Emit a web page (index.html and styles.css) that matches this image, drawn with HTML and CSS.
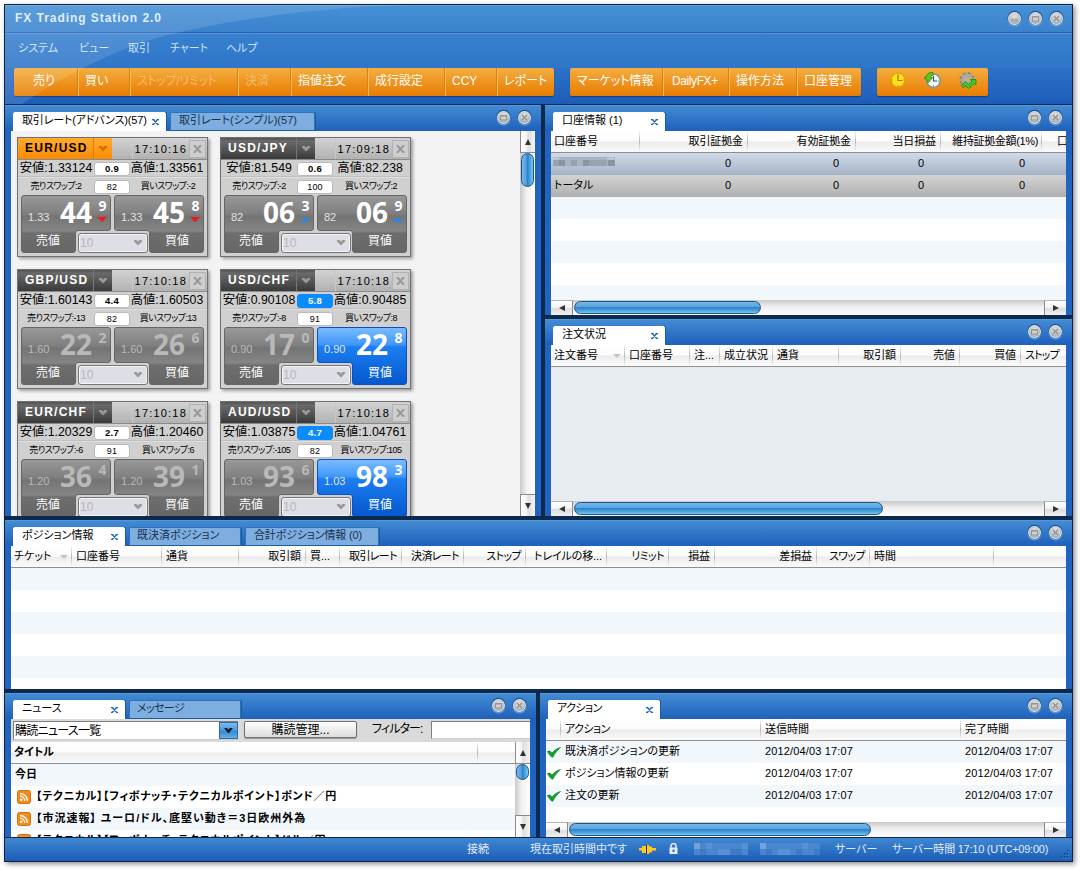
FILE: index.html
```html
<!DOCTYPE html>
<html lang="ja">
<head>
    <meta charset="UTF-8">
    <title>FX Trading Station 2.0</title>
    <link rel="stylesheet" href="styles.css">
</head>
<body>
    <!-- shared icons -->
    <svg class="defs" width="0" height="0">
        <defs>
            <linearGradient id="gray" x1="0" y1="0" x2="0" y2="1">
                <stop offset="0" stop-color="#999"/><stop offset=".32" stop-color="#7f7f7f"/>
                <stop offset=".36" stop-color="#747474"/><stop offset=".62" stop-color="#858585"/>
                <stop offset=".66" stop-color="#6e6e6e"/><stop offset="1" stop-color="#666"/>
            </linearGradient>
            <linearGradient id="blue" x1="0" y1="0" x2="0" y2="1">
                <stop offset="0" stop-color="#7dbdff"/><stop offset=".3" stop-color="#3f97fb"/>
                <stop offset=".34" stop-color="#1b7ef2"/><stop offset="1" stop-color="#0557cc"/>
            </linearGradient>
            <radialGradient id="knob" cx=".5" cy=".35" r=".65">
                <stop offset="0" stop-color="#e2e2e2"/><stop offset=".6" stop-color="#c6cacd"/><stop offset="1" stop-color="#9aa2a8"/>
            </radialGradient>
        </defs>
        <symbol id="i-base" viewBox="0 0 17 17">
            <circle cx="8.5" cy="9.5" r="7.2" fill="#79aee4" opacity=".65"/>
            <circle cx="8.5" cy="8" r="7.2" fill="#1d5290"/>
            <circle cx="8.5" cy="8.5" r="6.5" fill="#e6edf3"/>
            <circle cx="8.5" cy="8.3" r="5.7" fill="url(#knob)"/>
        </symbol>
        <symbol id="i-min" viewBox="0 0 17 17">
            <use href="#i-base"/><path d="M5.5 9h6v2h-6z" fill="#b5b5b5" stroke="#949494" stroke-width=".6"/>
        </symbol>
        <symbol id="i-max" viewBox="0 0 17 17">
            <use href="#i-base"/><path d="M5.5 6.500h6v4.500h-6zM5.500 7h6" fill="#cfcfcf" stroke="#949494"/>
        </symbol>
        <symbol id="i-close" viewBox="0 0 17 17">
            <use href="#i-base"/><path d="M6 6l5 5M11 6l-5 5" stroke="#949494" stroke-width="1.6"/>
        </symbol>
        <symbol id="i-x" viewBox="0 0 7 6">
            <path d="M0 .5h2.500M4.500.5H7M0 5.500h2.500M4.500 5.500H7M1.300.5l4.400 5M5.700.5l-4.400 5" stroke="#1f66ae" stroke-width="1.300"/>
        </symbol>
        <symbol id="i-rss" viewBox="0 0 14 14">
            <rect x=".5" y=".5" width="13" height="13" rx="2" fill="#f28a1c" stroke="#d9730a"/>
            <circle cx="4.2" cy="9.8" r="1.3" fill="#fff"/>
            <path d="M3 6.2a4.8 4.8 0 0 1 4.8 4.8M3 3.5A7.5 7.5 0 0 1 10.5 11" fill="none" stroke="#fff" stroke-width="1.3"/>
        </symbol>
        <symbol id="i-check" viewBox="0 0 14 11">
            <path d="M.5 4.5c1.600-.8 3.200-.4 4.500 1.500C7.200 3.500 10 1.300 13.500.5 10.500 3 8 6 5.800 10.300 3.800 9.900 1.700 7.500.5 4.500z" fill="#12a32d" stroke="#087a1c" stroke-width=".6"/>
        </symbol>
    </svg>

    <div class="window">
        <svg class="shine" width="400" height="99"><path d="M0 0H400C300 3 210 17 145 35 90 53 45 80 17 99H0z" fill="#fff" fill-opacity=".12"/></svg>

        <div class="titlebar">
            <span class="title">FX Trading Station 2.0</span>
            <span class="win-btns"><svg><use href="#i-min"/></svg><svg><use href="#i-max"/></svg><svg><use href="#i-close"/></svg></span>
        </div>

        <div class="menu">
            <span>システム</span><span>ビュー</span><span>取引</span><span>チャート</span><span>ヘルプ</span>
        </div>

        <div class="toolbar">
            <div class="tools tools-main">
                <span class="first">売り</span><span>買い</span><span class="off">ストップ/リミット</span><span class="off">決済</span><span>指値注文</span><span>成行設定</span><span>CCY</span><span>レポート</span>
            </div>
            <div class="tools tools-info">
                <span>マーケット情報</span><span class="daily">DailyFX+</span><span>操作方法</span><span>口座管理</span>
            </div>
            <div class="tools tools-icons">
                <svg width="16" height="16" viewBox="0 0 16 16">
                    <circle cx="8" cy="8" r="7" fill="#ffe01c" stroke="#e0a000" stroke-width="1.200"/>
                    <path d="M8 3V8.500H12.500" fill="none" stroke="#c26a00" stroke-width="1.200"/>
                    <path d="M8 1.500v1.200M8 13.300v1.200M1.500 8h1.200M13.300 8h1.200" stroke="#b87800"/>
                </svg>
                <svg width="17" height="16" viewBox="0 0 17 16">
                    <circle cx="9.500" cy="8.700" r="6.600" fill="#f2f9fd" stroke="#6f97ab" stroke-width="1.300"/>
                    <path d="M9.500 4V9H13M9.500 13.500v.8M15 9h-.8" fill="none" stroke="#3a5563" stroke-width="1.200"/>
                    <path d="M9 .5C4.500 0 2.200 2.500 2 5.500H.4L4.300 10.800 8.500 5.500H6.300C6.500 4 7.500 3.300 9 3.500z" fill="#5cc51c" stroke="#2f8209" stroke-width=".8"/>
                </svg>
                <svg width="18" height="17" viewBox="0 0 18 17">
                    <circle cx="8" cy="7.500" r="6.200" fill="none" stroke="#7c8b94" stroke-width="2.600" stroke-dasharray="2.800 2.070"/>
                    <circle cx="8" cy="7.500" r="4" fill="#f0a548" stroke="#9eadb6" stroke-width="3.400"/>
                    <path d="M2.500 14L6.500 9.500 9.500 12.500 13 9 11.500 7.500H17V12.700L15.500 11.500 9.500 16.500 6.500 13.500 4.500 15.800z" fill="#43c92b" stroke="#168a10" stroke-width=".8"/>
                </svg>
            </div>
        </div>

        <div class="row row-top">
            <section class="panel rates">
                <div class="tabs">
                    <span class="tab on t153">取引レート(アドバンス)(57)<svg class="x"><use href="#i-x"/></svg></span>
                    <span class="tab t145">取引レート(シンプル)(57)</span>
                    <span class="win-btns"><svg><use href="#i-max"/></svg><svg><use href="#i-close"/></svg></span>
                </div>
                <div class="content rates-body">
                    <div class="cards" id="cards"></div>
                    <div class="vscroll"><i class="up"></i><b class="thumb"></b><i class="down"></i></div>
                </div>
            </section>

            <div class="col">
                <section class="panel account">
                    <div class="tabs">
                        <span class="tab on">口座情報 (1)<svg class="x"><use href="#i-x"/></svg></span>
                        <span class="win-btns"><svg><use href="#i-max"/></svg><svg><use href="#i-close"/></svg></span>
                    </div>
                    <div class="content striped">
                        <div class="tr th cols-account">
                            <span>口座番号</span><span class="r">取引証拠金</span><span class="r">有効証拠金</span><span class="r">当日損益</span><span class="r tight">維持証拠金額(1%)</span><span>口</span>
                        </div>
                        <div class="tr selected cols-account num">
                            <span><svg class="mosaic" width="62" height="9" shape-rendering="crispEdges">
                                <path d="M0 0h62v9H0z" fill="#a9b4c3"/>
                                <path d="M0 3h6v6H0zM18 3h6v6h-6zM36 3h18v6H36z" fill="#97a3b1"/>
                                <path d="M6 3h6v6H6zM30 3h6v6h-6zM55 3h7v6h-7z" fill="#8794a2"/>
                                <path d="M0 0h6v3H0zM54 0h7v3h-7z" fill="#bac6d3"/>
                            </svg></span><span class="r">0</span><span class="r">0</span><span class="r">0</span><span class="r">0</span><span></span>
                        </div>
                        <div class="tr total cols-account num">
                            <span>トータル</span><span class="r">0</span><span class="r">0</span><span class="r">0</span><span class="r">0</span><span></span>
                        </div>
                        <div class="hscroll"><i class="left"></i><b class="thumb w187"></b><i class="right"></i></div>
                    </div>
                </section>

                <section class="panel orders">
                    <div class="tabs">
                        <span class="tab on">注文状況<svg class="x"><use href="#i-x"/></svg></span>
                        <span class="win-btns"><svg><use href="#i-max"/></svg><svg><use href="#i-close"/></svg></span>
                    </div>
                    <div class="content empty">
                        <div class="tr th cols-orders">
                            <span class="sorted">注文番号</span><span>口座番号</span><span>注...</span><span>成立状況</span><span>通貨</span><span class="r">取引額</span><span class="r">売値</span><span class="r">買値</span><span class="stop">ストップ</span>
                        </div>
                        <div class="hscroll"><i class="left"></i><b class="thumb w309"></b><i class="right"></i></div>
                    </div>
                </section>
            </div>
        </div>

        <section class="panel positions">
            <div class="tabs">
                <span class="tab on">ポジション情報<svg class="x"><use href="#i-x"/></svg></span>
                <span class="tab">既決済ポジション</span>
                <span class="tab t134">合計ポジション情報 (0)</span>
                <span class="win-btns"><svg><use href="#i-max"/></svg><svg><use href="#i-close"/></svg></span>
            </div>
            <div class="content striped">
                <div class="tr th cols-positions">
                    <span class="sorted">チケット</span><span>口座番号</span><span>通貨</span><span class="r">取引額</span><span>買...</span><span class="r kana">取引レート</span><span class="r kana">決済レート</span><span class="r kana">ストップ</span><span class="r">トレイルの移...</span><span class="r kana">リミット</span><span class="r">損益</span><span class="r">差損益</span><span class="r kana">スワップ</span><span>時間</span><span></span>
                </div>
            </div>
        </section>

        <div class="row row-bottom">
            <section class="panel news">
                <div class="tabs">
                    <span class="tab on">ニュース<svg class="x"><use href="#i-x"/></svg></span>
                    <span class="tab kana">メッセージ</span>
                    <span class="win-btns"><svg><use href="#i-max"/></svg><svg><use href="#i-close"/></svg></span>
                </div>
                <div class="content">
                    <div class="filter">
                        <div class="select"><span>購読ニュース一覧</span><i><svg width="9" height="6"><path d="M0 0h3l1.500 1.500L6 0h3L4.500 5.500z" fill="#0b1d33"/></svg></i></div>
                        <div class="button">購読管理...</div>
                        <label>フィルター:</label>
                        <div class="input"></div>
                    </div>
                    <div class="news-body">
                        <div class="news-list">
                            <div class="tr th cols-news"><span>タイトル</span><span></span></div>
                            <div class="news-row">今日</div>
                            <div class="news-row item"><svg><use href="#i-rss"/></svg>【テクニカル】【フィボナッチ・テクニカルポイント】ポンド／円</div>
                            <div class="news-row item wide"><svg><use href="#i-rss"/></svg>【市況速報】 ユーロ/ドル、底堅い動き＝3日欧州外為</div>
                            <div class="news-row item"><svg><use href="#i-rss"/></svg>【テクニカル】【フィボナッチ・テクニカルポイント】ドル／円</div>
                        </div>
                        <div class="vscroll"><i class="up"></i><b class="thumb"></b><i class="down"></i></div>
                    </div>
                </div>
            </section>

            <section class="panel actions">
                <div class="tabs">
                    <span class="tab on kana">アクション<svg class="x"><use href="#i-x"/></svg></span>
                    <span class="win-btns"><svg><use href="#i-max"/></svg><svg><use href="#i-close"/></svg></span>
                </div>
                <div class="content striped">
                    <div class="tr th cols-actions"><span></span><span class="kana">アクション</span><span>送信時間</span><span>完了時間</span></div>
                    <div class="tr cols-actions"><span><svg class="check"><use href="#i-check"/></svg></span><span>既決済ポジションの更新</span><span class="date">2012/04/03 17:07</span><span class="date">2012/04/03 17:07</span></div>
                    <div class="tr cols-actions"><span><svg class="check"><use href="#i-check"/></svg></span><span>ポジション情報の更新</span><span class="date">2012/04/03 17:07</span><span class="date">2012/04/03 17:07</span></div>
                    <div class="tr cols-actions"><span><svg class="check"><use href="#i-check"/></svg></span><span>注文の更新</span><span class="date">2012/04/03 17:07</span><span class="date">2012/04/03 17:07</span></div>
                    <div class="hscroll"><i class="left"></i><b class="thumb w302"></b><i class="right"></i></div>
                </div>
            </section>
        </div>

        <div class="status">
            <span class="s-conn">接続</span>
            <span class="s-open">現在取引時間中です</span>
            <svg class="s-plug" width="17" height="9"><path d="M0 3h3V1h4v7H3V5.500H0zM8 0h2v9H8zM10 1.500h3V3h4v2.500h-4V7.500h-3z" fill="#ffc91c"/><path d="M7.500 0v9" stroke="#173a66"/></svg>
            <svg class="s-lock" width="9" height="11"><path d="M2 5V3a2.500 2.500 0 0 1 5 0v2" fill="none" stroke="#e4edf7" stroke-width="1.500"/><path d="M.5 4.500h8V11h-8z" fill="#e4edf7"/><path d="M3.500 6.500h2v2.500h-2z" fill="#2f6fc0"/></svg>
            <svg class="s-mosaic" width="127" height="12" shape-rendering="crispEdges">
                <path d="M0 0h54v12H0zM66 0h60v12H66z" fill="#4a86cf"/>
                <path d="M0 0h6v6H0zM66 0h6v6h-6z" fill="#73a3dd"/>
                <path d="M12 0h6v6h-6zM24 6h12v6H24zM48 0h6v6h-6zM84 6h12v6H84zM108 0h6v6h-6z" fill="#5890d4"/>
                <path d="M6 6h6v6H6zM36 6h12v6H36zM72 6h6v6h-6zM102 6h6v6h-6zM120 6h6v6h-6z" fill="#3f7ac6"/>
            </svg>
            <span class="s-server">サーバー</span>
            <span class="s-time">サーバー時間 17:10 (UTC+09:00)</span>
            <svg class="s-grip" width="9" height="9"><path d="M7 1h2M7 4h2M7 7h2M4 4h2M4 7h2M1 7h2" stroke="#164a92" stroke-width="2"/><path d="M8 2h1M8 5h1M8 8h1M5 5h1M5 8h1M2 8h1" stroke="#6ba4e2"/></svg>
        </div>
    </div>
    <script src="rates.js"></script>
</body>
</html>
```
FILE: styles.css
```css
* {
    box-sizing: border-box;
}

body {
    margin: 0;
    width: 1081px;
    height: 870px;
    overflow: hidden;
    background: #fff;
    font-family: "Liberation Sans", "Noto Sans CJK JP", sans-serif;
    font-feature-settings: "palt";
    font-size: 11px;
    color: #000;
    white-space: nowrap;
}

.defs {
    display: block;
}

.window {
    position: relative;
    width: 1069px;
    height: 858px;
    margin: 4px 0 0 4px;
    border: 1px solid #14243c;
    background: #0d2a4c;
    box-shadow: 2px 2px 5px rgba(0, 0, 0, 0.45);
    display: flex;
    flex-direction: column;
}

/* light arc over the header */
.shine {
    position: absolute;
    left: 0;
    top: 0;
    z-index: 2;
}

/* header */
.titlebar {
    height: 28px;
    background: linear-gradient(#4590d6, #3b82cd);
    border-top: 1px solid #5ba2e2;
    border-bottom: 1px solid #2560b8;
    display: flex;
    justify-content: space-between;
    padding: 3px 7px 0 10px;
}

.title {
    font-size: 12px;
    font-weight: bold;
    line-height: 19px;
    letter-spacing: 0.95px;
    color: #dcebfa;
}

.win-btns {
    display: flex;
    gap: 4px;
}

.win-btns svg {
    width: 17px;
    height: 17px;
}

.titlebar .win-btns {
    padding-top: 1px;
}

.menu {
    height: 35px;
    padding: 6px 0 0 13px;
    background: linear-gradient(#3881cd, #2f75ca);
    border-top: 1px solid #5795d8;
    line-height: 16px;
    color: #cfe2f6;
    display: grid;
    grid-template-columns: 61px 49px 42px 56px 60px;
}

.toolbar {
    height: 36px;
    background: linear-gradient(#2d71c7, #1d5dba);
    padding-left: 9px;
    display: flex;
}

.tools {
    height: 28px;
    border-radius: 2px;
    background: linear-gradient(#f4af3f, #ee9420 50%, #e87d02);
    box-shadow: 0 1px 1px #16407c;
    display: grid;
    font-size: 12px;
    line-height: 26px;
    color: #fff;
}

.tools span {
    padding-left: 6px;
    border-left: 1px solid #f7bb5c;
    box-shadow: -1px 0 0 #dc8010;
}

.tools span:first-child {
    border: none;
    box-shadow: none;
    padding-left: 7px;
}

.tools .first:first-child {
    padding-left: 19px;
}

.tools .off {
    color: #f5bb69;
    letter-spacing: -0.3px;
}

.tools .daily {
    padding-left: 8px;
    letter-spacing: -0.4px;
}

.tools-main {
    width: 540px;
    grid-template-columns: 64px 52px 108px 53px 77px 77px 52px 57px;
}

.tools-info {
    width: 291px;
    margin-left: 16px;
    grid-template-columns: 93px 66px 68px 64px;
}

.tools-icons {
    width: 111px;
    margin-left: 16px;
    display: flex;
    padding: 4px 0 0 13px;
    gap: 18px;
}

/* panels */
.row {
    display: flex;
    gap: 4px;
}

.row-top {
    height: 411px;
    margin-top: 1px;
}

.row-bottom {
    height: 144px;
    margin-top: 4px;
}

.col {
    display: flex;
    flex-direction: column;
    gap: 4px;
}

.panel {
    background: #2064bf;
    padding: 0 6px;
    display: flex;
    flex-direction: column;
    overflow: hidden;
}

.rates {
    width: 536px;
}

.account {
    width: 527px;
    height: 210px;
}

.orders {
    width: 527px;
    height: 197px;
}

.positions {
    height: 169px;
    margin-top: 4px;
}

.news {
    width: 531px;
}

.actions {
    width: 532px;
}

.tabs {
    height: 26px;
    flex: none;
    margin: 0 -6px;
    padding: 6px 8px 0 8px;
    border-top: 1px solid #5199dd;
    background: linear-gradient(#428bd4, #1f60bb);
    display: flex;
    gap: 4px;
}

.tabs .win-btns {
    margin: -3px 0 0 auto;
}

.tab {
    width: 112px;
    height: 19px;
    padding-left: 7px;
    line-height: 15px;
    border-radius: 2px 2px 0 0;
    background: #7eaee0;
    border: 1px solid #2b74bd;
    border-bottom-color: #195f9e;
    box-shadow: 1px 0 0 #175c9d;
    color: #17304f;
}

.tab.on {
    height: 20px;
    padding-left: 8px;
    background: #fff;
    border-color: #fff;
    color: #000;
    display: flex;
    justify-content: space-between;
}

.tab .x {
    width: 7px;
    height: 6px;
    margin: 6px 6px 0 0;
}

.t153 {
    width: 153px;
    letter-spacing: -0.15px;
}

.t145 {
    width: 145px;
    padding-left: 8px;
}

.t134 {
    width: 134px;
    letter-spacing: -0.15px;
    padding-left: 8px;
}

.content {
    flex: 1;
    background: #fff;
    display: flex;
    flex-direction: column;
    min-height: 0;
    overflow: hidden;
}

.striped,
.news-list {
    background: repeating-linear-gradient(#fff 0 22px, #f2f7fb 22px 44px);
}

.empty {
    background: #e7ecf0;
}

/* table rows */
.tr {
    display: grid;
    flex: none;
    height: 22px;
    line-height: 20px;
    overflow: hidden;
}

.tr span {
    padding-left: 4px;
}

.tr span:first-child {
    padding-left: 3px;
}

.tr .r {
    text-align: right;
    padding-right: 4px;
    letter-spacing: -0.1px;
}

.num .r {
    padding-right: 17px;
}

.th {
    border-bottom: 1px solid #8f8f8f;
    background: linear-gradient(#fff 0, #fbfbfb 48%, #ececec 52%, #fafafa 100%);
}

.th span {
    border-right: 1px solid;
    border-image: linear-gradient(#fff, #b5b5b5, #fff) 1;
}

.th span:last-child {
    border-right: none;
}

.sorted {
    position: relative;
}

.sorted::after {
    content: "";
    position: absolute;
    right: 3px;
    top: 9px;
    border: 4px solid transparent;
    border-top: 4px solid #c2c2c2;
}

.th .tight {
    letter-spacing: -0.35px;
    padding-right: 3px;
}

.kana,
.tr .kana {
    letter-spacing: -0.6px;
}

.stop {
    letter-spacing: -0.8px;
}

.cols-account {
    grid-template-columns: 89px 108px 108px 85px 101px 24px;
}

.cols-account span:last-child {
    padding-left: 15px;
}

.cols-orders {
    grid-template-columns: 74px 65px 30px 53px 66px 62px 59px 61px 45px;
}

.cols-positions {
    grid-template-columns: 61px 90px 77px 67px 34px 62px 62px 62px 81px 62px 46px 102px 53px 124px 72px;
}

.cols-news {
    grid-template-columns: 467px 37px;
}

.cols-actions {
    grid-template-columns: 15px 200px 200px 105px;
}

.cols-actions span:first-child {
    padding-left: 0;
}

.selected {
    background: linear-gradient(#d0dbe8, #a5b3c5);
}

.total {
    background: linear-gradient(#d3d3d3, #b0b0b0);
}

.mosaic {
    display: block;
    margin: 4px 0 0 -1px;
}

.check {
    display: block;
    width: 14px;
    height: 11px;
    margin: 6px 0 0 1px;
}

.date {
    letter-spacing: 0.15px;
}

/* scrollbars */
.hscroll {
    height: 15px;
    margin-top: auto;
    background: linear-gradient(#c9c9c9, #efefef 45%, #fdfdfd);
    display: flex;
}

.hscroll i,
.vscroll i {
    flex: none;
    display: flex;
    align-items: center;
    justify-content: center;
    background: linear-gradient(#fff, #f4f4f4 45%, #dedede 55%, #f0f0f0);
}

.hscroll i {
    width: 22px;
    height: 15px;
    border-right: 1px solid #8a8a8a;
    border-top: 1px solid #b5b5b5;
}

.hscroll .right {
    margin-left: auto;
    border-right: none;
    border-left: 1px solid #8a8a8a;
}

.hscroll i::before,
.vscroll i::before {
    content: "";
    border: 3.5px solid transparent;
}

.hscroll .left::before {
    border-right: 6px solid #333;
    border-left: 0;
}

.hscroll .right::before {
    border-left: 6px solid #333;
    border-right: 0;
}

.hscroll .thumb {
    height: 13px;
    margin: 1px 0 0 1px;
    border: 1px solid #1b5688;
    border-radius: 7px;
    background: linear-gradient(#74b8ea, #58a3df 45%, #2f83cb 50%, #4ea6e2 80%, #7cc8f0);
}

.w187 {
    width: 187px;
}

.w302 {
    width: 302px;
}

.w309 {
    width: 309px;
}

.vscroll {
    width: 15px;
    flex: none;
    background: linear-gradient(90deg, #c9c9c9, #f2f2f2 45%, #fdfdfd);
    display: flex;
    flex-direction: column;
}

.vscroll i {
    height: 22px;
    border: 0 solid #8a8a8a;
    border-left-width: 1px;
    border-bottom-width: 1px;
    background: linear-gradient(90deg, #fff, #f4f4f4 40%, #dedede 50%, #f4f4f4);
}

.vscroll .down {
    margin-top: auto;
    border-bottom: none;
    border-top-width: 1px;
}

.vscroll .up::before {
    border-bottom: 6px solid #333;
    border-top: 0;
}

.vscroll .down::before {
    border-top: 6px solid #333;
    border-bottom: 0;
}

.vscroll .thumb {
    width: 13px;
    margin: 0 0 0 1px;
    height: 34px;
    border: 1px solid #1b5688;
    border-radius: 7px;
    background: linear-gradient(90deg, #74b8ea, #58a3df 35%, #2f83cb 50%, #4ea6e2 75%, #7cc8f0);
}

.news .vscroll .thumb {
    height: 16px;
}

/* rate cards */
.rates-body {
    flex-direction: row;
    background: #f3f3f3;
}

.cards {
    flex: 1;
    height: 385px;
    overflow: hidden;
    display: grid;
    grid-template-columns: 191px 191px;
    grid-auto-rows: 120px;
    gap: 12px;
    padding: 6px 0 0 6px;
}

.card {
    border: 1px solid #707070;
    background: #d0d0d0;
    box-shadow: 2px 2px 3px rgba(0, 0, 0, 0.35);
}

.card-head {
    height: 22px;
    display: flex;
    border-bottom: 1px solid #8a8a8a;
    background: linear-gradient(#d2d2d2, #b2b2b2);
}

.pair {
    width: 75px;
    padding-left: 7px;
    font-size: 12px;
    font-weight: bold;
    line-height: 20px;
    letter-spacing: 1.25px;
    color: #fff;
    background: linear-gradient(#525252, #6a6a6a 15%, #3a3a3a);
}

.drop {
    width: 19px;
    display: flex;
    align-items: center;
    justify-content: center;
    background: linear-gradient(#525252, #6a6a6a 15%, #3a3a3a);
    border-left: 1px solid #777;
}

.active .pair,
.active .drop {
    color: #000;
    background: linear-gradient(#ffab2e, #fb8b04);
}

.active .drop {
    border-left-color: #e07c08;
}

.time {
    flex: 1;
    margin-left: 20px;
    line-height: 22px;
    font-size: 11px;
    letter-spacing: 1.2px;
    text-align: right;
    padding-right: 1px;
    border-left: 1px solid #c8c8c8;
}

.del {
    width: 17px;
    height: 18px;
    margin: 2px 1px 0 1px;
    border: 1px solid #b2b2b2;
    background: #cecece;
}

.del svg {
    display: block;
    margin: 4px 0 0 3px;
}

.line {
    height: 18px;
    display: grid;
    grid-template-columns: 76px 36px 76px;
    align-items: center;
}

.line span {
    text-align: center;
}

.quote {
    height: 17px;
    font-size: 12.3px;
    line-height: 17px;
}

.quote span:last-child {
    padding-right: 2px;
}

.swap {
    height: 18px;
    font-size: 9px;
    line-height: 17px;
    letter-spacing: -0.55px;
    border-top: 1px solid #dedede;
    box-shadow: 0 -1px 0 #c0c0c0;
}

.line .pill {
    height: 14px;
    position: relative;
    border-radius: 3px;
    background: #fff;
    border: 1px solid #bababa;
    font-size: 9px;
    line-height: 12px;
    letter-spacing: 0.2px;
}

.quote .pill {
    font-weight: bold;
    font-size: 9.5px;
}

.line .hot {
    background: #0a8cff;
    border-color: #0a8cff;
    color: #fff;
}

.deals {
    position: relative;
    height: 58px;
    margin: 0 3px 0 3px;
    display: flex;
    justify-content: space-between;
}

.deal {
    position: relative;
    width: 90px;
    height: 58px;
    color: #fff;
}

.deal .shape {
    position: absolute;
    left: 0;
    top: 0;
}

.price {
    position: relative;
    height: 37px;
    padding: 0 3px 0 7px;
    display: grid;
    grid-template-columns: 27px 42px 11px;
}

.lead {
    font-size: 11px;
    line-height: 44px;
    color: #e2e2e2;
}

.big {
    font: bold 28px/34px "Open Sans", sans-serif;
    text-align: center;
}

.pip {
    font: bold 14px/22px "Open Sans", sans-serif;
    text-align: center;
}

.pip i {
    display: block;
    width: 0;
    border: 5px solid transparent;
}

.pip .fall {
    border-top-color: #f01818;
    border-bottom: 0;
}

.pip .rise {
    border-bottom-color: #2a86e8;
    border-top: 0;
}

.dim .price,
.dim .lead {
    color: #b9b9b9;
}

.side {
    position: relative;
    width: 54px;
    text-align: center;
    font-size: 12px;
    line-height: 19px;
}

.buy .side {
    margin-left: 36px;
}

.amount {
    position: absolute;
    left: 57px;
    top: 38px;
    width: 70px;
    height: 20px;
    border: 1px solid #777;
    border-radius: 3px;
    background: #dedee6;
    box-shadow: inset 0 0 0 1px #f5f5f5;
    color: #b7b7bd;
    font-size: 12px;
    line-height: 18px;
    display: flex;
    justify-content: space-between;
    align-items: center;
    padding: 0 5px 0 1px;
}

/* news */
.filter {
    height: 23px;
    flex: none;
    background: #dadada;
    display: flex;
    font-size: 12px;
    padding: 2px 0 0 2px;
}

.select {
    width: 225px;
    height: 19px;
    border: 1px solid #7d7d7d;
    border-right: none;
    border-bottom-color: #ccc;
    background: #fff;
    display: flex;
    justify-content: space-between;
    line-height: 18px;
    letter-spacing: -0.7px;
    padding-left: 1px;
}

.select i {
    width: 19px;
    display: flex;
    align-items: center;
    justify-content: center;
    background: linear-gradient(#7fbcec, #4b96d9 50%, #3384cd 52%, #64b0e6);
    border: 1px solid #2c6da8;
}

.button {
    width: 113px;
    height: 17px;
    margin-left: 6px;
    border: 1px solid #707070;
    border-radius: 2px;
    background: linear-gradient(#fff, #ededed 50%, #dcdcdc);
    box-shadow: 0 1px 1px #999;
    text-align: center;
    line-height: 16px;
}

.filter label {
    width: 74px;
    padding-left: 15px;
    line-height: 17px;
    letter-spacing: -0.9px;
}

.input {
    flex: 1;
    height: 18px;
    border: 1px solid #808080;
    border-right: none;
    border-bottom-color: #ccc;
    background: #fff;
}

.news-body {
    flex: 1;
    display: flex;
    min-height: 0;
}

.news-list {
    flex: 1;
    overflow: hidden;
    font-weight: bold;
}

.news-row {
    height: 22px;
    line-height: 20px;
    padding-left: 4px;
    display: flex;
}

.item {
    padding-left: 6px;
    letter-spacing: 0.62px;
}

.wide {
    letter-spacing: 0.97px;
}

.item svg {
    width: 14px;
    height: 14px;
    margin: 4px 5px 0 0;
}

/* status bar */
.status {
    height: 24px;
    border-top: 1px solid #10294a;
    background: linear-gradient(#3f88d1, #1c5cb7);
    color: #e0ebf8;
    line-height: 22px;
    display: flex;
    padding-left: 462px;
}

.s-conn {
    width: 63px;
}

.s-open {
    width: 109px;
}

.s-plug {
    margin: 7px 13px 0 0;
}

.s-lock {
    margin: 5px 16px 0 0;
}

.s-mosaic {
    margin-top: 5px;
}

.s-server {
    width: 57px;
    margin-left: 14px;
}

.s-time {
    width: 168px;
    letter-spacing: -0.24px;
}

.s-grip {
    margin-top: 12px;
}
```
FILE: rates.js
```javascript
// sell / buy: [lead digits, big digits, pip, direction]
const rates = [
    { pair: 'EUR/USD', active: true, time: '17:10:16', low: '1.33124', spread: '0.9', high: '1.33561', ss: '2', mid: '82', bs: '-2', sell: ['1.33', '44', '9', 'fall'], buy: ['1.33', '45', '8', 'fall'] },
    { pair: 'USD/JPY', time: '17:09:18', low: '81.549', spread: '0.6', high: '82.238', ss: '-2', mid: '100', bs: '2', sell: ['82', '06', '3', 'rise'], buy: ['82', '06', '9', 'rise'] },
    { pair: 'GBP/USD', time: '17:10:18', low: '1.60143', spread: '4.4', high: '1.60503', ss: '-13', mid: '82', bs: '13', sell: ['1.60', '22', '2'], buy: ['1.60', '26', '6'] },
    { pair: 'USD/CHF', hot: true, time: '17:10:18', low: '0.90108', spread: '5.8', high: '0.90485', ss: '-8', mid: '91', bs: '8', sell: ['0.90', '17', '0'], buy: ['0.90', '22', '8'] },
    { pair: 'EUR/CHF', time: '17:10:18', low: '1.20329', spread: '2.7', high: '1.20460', ss: '-6', mid: '91', bs: '6', sell: ['1.20', '36', '4'], buy: ['1.20', '39', '1'] },
    { pair: 'AUD/USD', hot: true, time: '17:10:18', low: '1.03875', spread: '4.7', high: '1.04761', ss: '-105', mid: '82', bs: '105', sell: ['1.03', '93', '6'], buy: ['1.03', '98', '3'] }
];

const outline = 'M3 .5H87a2.500 2.500 0 0 1 2.500 2.500V33a2.500 2.500 0 0 1-2.500 2.500H57a2.500 2.500 0 0 0-2.500 2.500V55a2.500 2.500 0 0 1-2.500 2.500H3A2.500 2.500 0 0 1 .5 55V3A2.500 2.500 0 0 1 3 .5Z';

function chevron(color) {
    return `<svg width="8" height="6"><path d="M0 0h2.500L4 1.500 5.500 0H8v1.500L4 5.500 0 1.500z" fill="${color}"/></svg>`;
}

function deal(side, p, hot) {
    const state = hot || p[3] ? '' : 'dim';
    const flip = side === 'buy' ? 'transform="translate(90 0) scale(-1 1)"' : '';
    return `
        <div class="deal ${side} ${state}">
            <svg class="shape" width="90" height="58"><path ${flip} d="${outline}" fill="url(#${hot ? 'blue' : 'gray'})" stroke="${hot ? '#0b4fc0' : '#666'}"/></svg>
            <div class="price">
                <span class="lead">${p[0]}</span><span class="big">${p[1]}</span>
                <span class="pip">${p[2]}${p[3] ? `<i class="${p[3]}"></i>` : ''}</span>
            </div>
            <div class="side">${side === 'sell' ? '売値' : '買値'}</div>
        </div>`;
}

document.getElementById('cards').innerHTML = rates.map(r => `
    <div class="card ${r.active ? 'active' : ''}">
        <div class="card-head">
            <span class="pair">${r.pair}</span>
            <span class="drop">${chevron(r.active ? '#d96a00' : '#999')}</span>
            <span class="time">${r.time}</span>
            <span class="del"><svg width="9" height="8"><path d="M1 0l7 8M8 0L1 8" stroke="#999" stroke-width="2"/></svg></span>
        </div>
        <div class="line quote"><span>安値:${r.low}</span><span class="pill ${r.hot ? 'hot' : ''}">${r.spread}</span><span>高値:${r.high}</span></div>
        <div class="line swap"><span>売りスワップ:${r.ss}</span><span class="pill">${r.mid}</span><span>買いスワップ:${r.bs}</span></div>
        <div class="deals">
            ${deal('sell', r.sell, false)}
            ${deal('buy', r.buy, r.hot)}
            <div class="amount"><span>10</span>${chevron('#999')}</div>
        </div>
    </div>`).join('');
```
